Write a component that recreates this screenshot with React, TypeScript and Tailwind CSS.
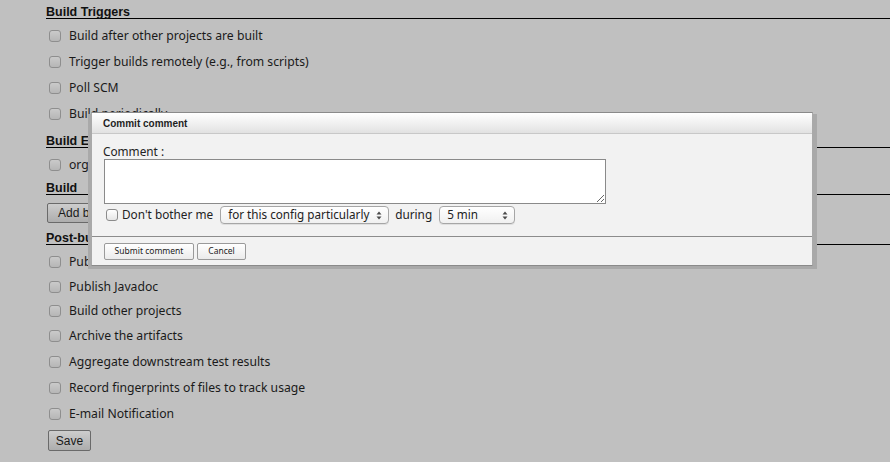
import React from "react";

const body = "font-['Noto_Sans',sans-serif]";
const bold = "font-['Liberation_Sans',Arial,sans-serif] font-bold";

function Box({ dim }: { dim?: boolean }) {
  return dim ? (
    <span className="h-[12px] w-[12px] shrink-0 rounded-[3px] border border-[#8e8e8e] bg-linear-to-b from-[#cacaca] to-[#b6b6b6]" />
  ) : (
    <span className="h-[12px] w-[12px] shrink-0 rounded-[3px] border border-[#8b8b8b] bg-linear-to-b from-white to-[#e6e6e6]" />
  );
}

function Row({ label, h = "h-[26px]" }: { label: string; h?: string }) {
  return (
    <div className={`flex items-center pt-[2px] ${h}`}>
      <span className="ml-[3px] mr-[8px] flex">
        <Box dim />
      </span>
      <span className="whitespace-nowrap text-[12.2px] text-[#1a1a1a]">{label}</span>
    </div>
  );
}

function Heading({ text, className = "" }: { text: string; className?: string }) {
  return (
    <div
      className={`border-b border-black text-[12.5px] leading-[12px] text-[#111] ${bold} ${className}`}
    >
      {text}
    </div>
  );
}

function PageButton({ label, className = "" }: { label: string; className?: string }) {
  return (
    <div
      className={`flex items-center rounded-[2px] border border-[#6a6a6a] bg-linear-to-b from-[#cdcdcd] to-[#adadad] text-[12px] text-[#1a1a1a] font-['Liberation_Sans_Narrow','Liberation_Sans',sans-serif] ${className}`}
    >
      {label}
    </div>
  );
}

function Arrows() {
  return (
    <svg width="6" height="9" viewBox="0 0 6 9" className="shrink-0">
      <path d="M3 0.5 L5.5 3.5 L0.5 3.5 Z" fill="#4a4a4a" />
      <path d="M0.5 5.5 L5.5 5.5 L3 8.5 Z" fill="#4a4a4a" />
    </svg>
  );
}

function Select({ value, className }: { value: string; className: string }) {
  return (
    <div
      className={`flex h-[18px] items-center justify-between rounded-[4px] border border-[#a6a6a6] bg-linear-to-b from-white to-[#f0f0f0] pl-[7px] pr-[6px] text-[11.7px] text-[#222] shadow-[0_1px_0_rgba(0,0,0,0.08)] ${className}`}
    >
      <span className="whitespace-nowrap">{value}</span>
      <Arrows />
    </div>
  );
}

function SmallButton({ label, className }: { label: string; className: string }) {
  return (
    <div
      className={`flex h-[17px] items-center justify-center rounded-[2px] border border-[#9a9a9a] bg-linear-to-b from-white to-[#ebebeb] text-[8.5px] text-[#222] ${className}`}
    >
      {label}
    </div>
  );
}

function CommitDialog() {
  return (
    <>
      <div className="absolute left-[88px] top-[114px] h-[155px] w-[729px] bg-[#a9a9a9]" />
      <div className="absolute left-[91px] top-[112px] w-[722px] border-x border-t border-b border-x-[#a9a9a9] border-y-[#8a8a8a] bg-[#f2f2f2]">
        <div
          className={`flex h-[21px] items-center border-b border-[#c8c8c8] bg-linear-to-b from-white to-[#e2e2e2] pl-[11px] text-[10px] text-[#1f1f1f] ${bold}`}
        >
          Commit comment
        </div>
        <div className="h-[102px] pl-[11px] pt-[10px] text-[11.8px] text-[#222]">
          <div className="leading-[14px]">Comment :</div>
          <textarea
            readOnly
            className="ml-px mt-px block h-[45px] w-[502px] resize border border-[#8a8a8a] bg-white outline-none"
          />
          <div className="mt-[2px] flex h-[18px] items-center">
            <span className="ml-[3px] mr-[4px] flex">
              <Box />
            </span>
            <span className="whitespace-nowrap">Don't bother me</span>
            <Select value="for this config particularly" className="ml-[7px] w-[169px]" />
            <span className="ml-[6px] whitespace-nowrap">during</span>
            <Select value="5 min" className="ml-[7px] w-[76px]" />
          </div>
        </div>
        <div className="flex h-[29px] gap-[3px] border-t border-[#8c8c8c] pl-[12px] pt-[6px]">
          <SmallButton label="Submit comment" className="w-[90px]" />
          <SmallButton label="Cancel" className="w-[49px]" />
        </div>
      </div>
    </>
  );
}

export default function App() {
  return (
    <div className={`relative h-[462px] w-full overflow-hidden bg-[#c0c0c0] ${body}`}>
      <div className="pl-[46px]">
        <Heading text="Build Triggers" className="mb-[3px] pt-[6px]" />
        <Row label="Build after other projects are built" />
        <Row label="Trigger builds remotely (e.g., from scripts)" />
        <Row label="Poll SCM" />
        <Row label="Build periodically" />

        <Heading text="Build Environment" className="mb-[3px] mt-[7px] pt-[2px]" />
        <Row label="org.jvnet.hudson.plugins.configfiles.ConfigFileBuildWrapper" />

        <Heading text="Build" className="mt-[3px] pt-[2px]" />
        <PageButton label="Add build step" className="ml-px mt-[8px] h-[20px] w-[120px] px-[10px]" />

        <Heading text="Post-build Actions" className="mb-[3px] mt-[7px] pt-[2px]" />
        <Row label="Publish JUnit test result report" />
        <Row label="Publish Javadoc" h="h-[24px]" />
        <Row label="Build other projects" h="h-[24px]" />
        <Row label="Archive the artifacts" />
        <Row label="Aggregate downstream test results" />
        <Row label="Record fingerprints of files to track usage" />
        <Row label="E-mail Notification" />
        <PageButton label="Save" className="ml-[2px] mt-[4px] h-[21px] w-[43px] justify-center" />
      </div>
      <CommitDialog />
    </div>
  );
}
